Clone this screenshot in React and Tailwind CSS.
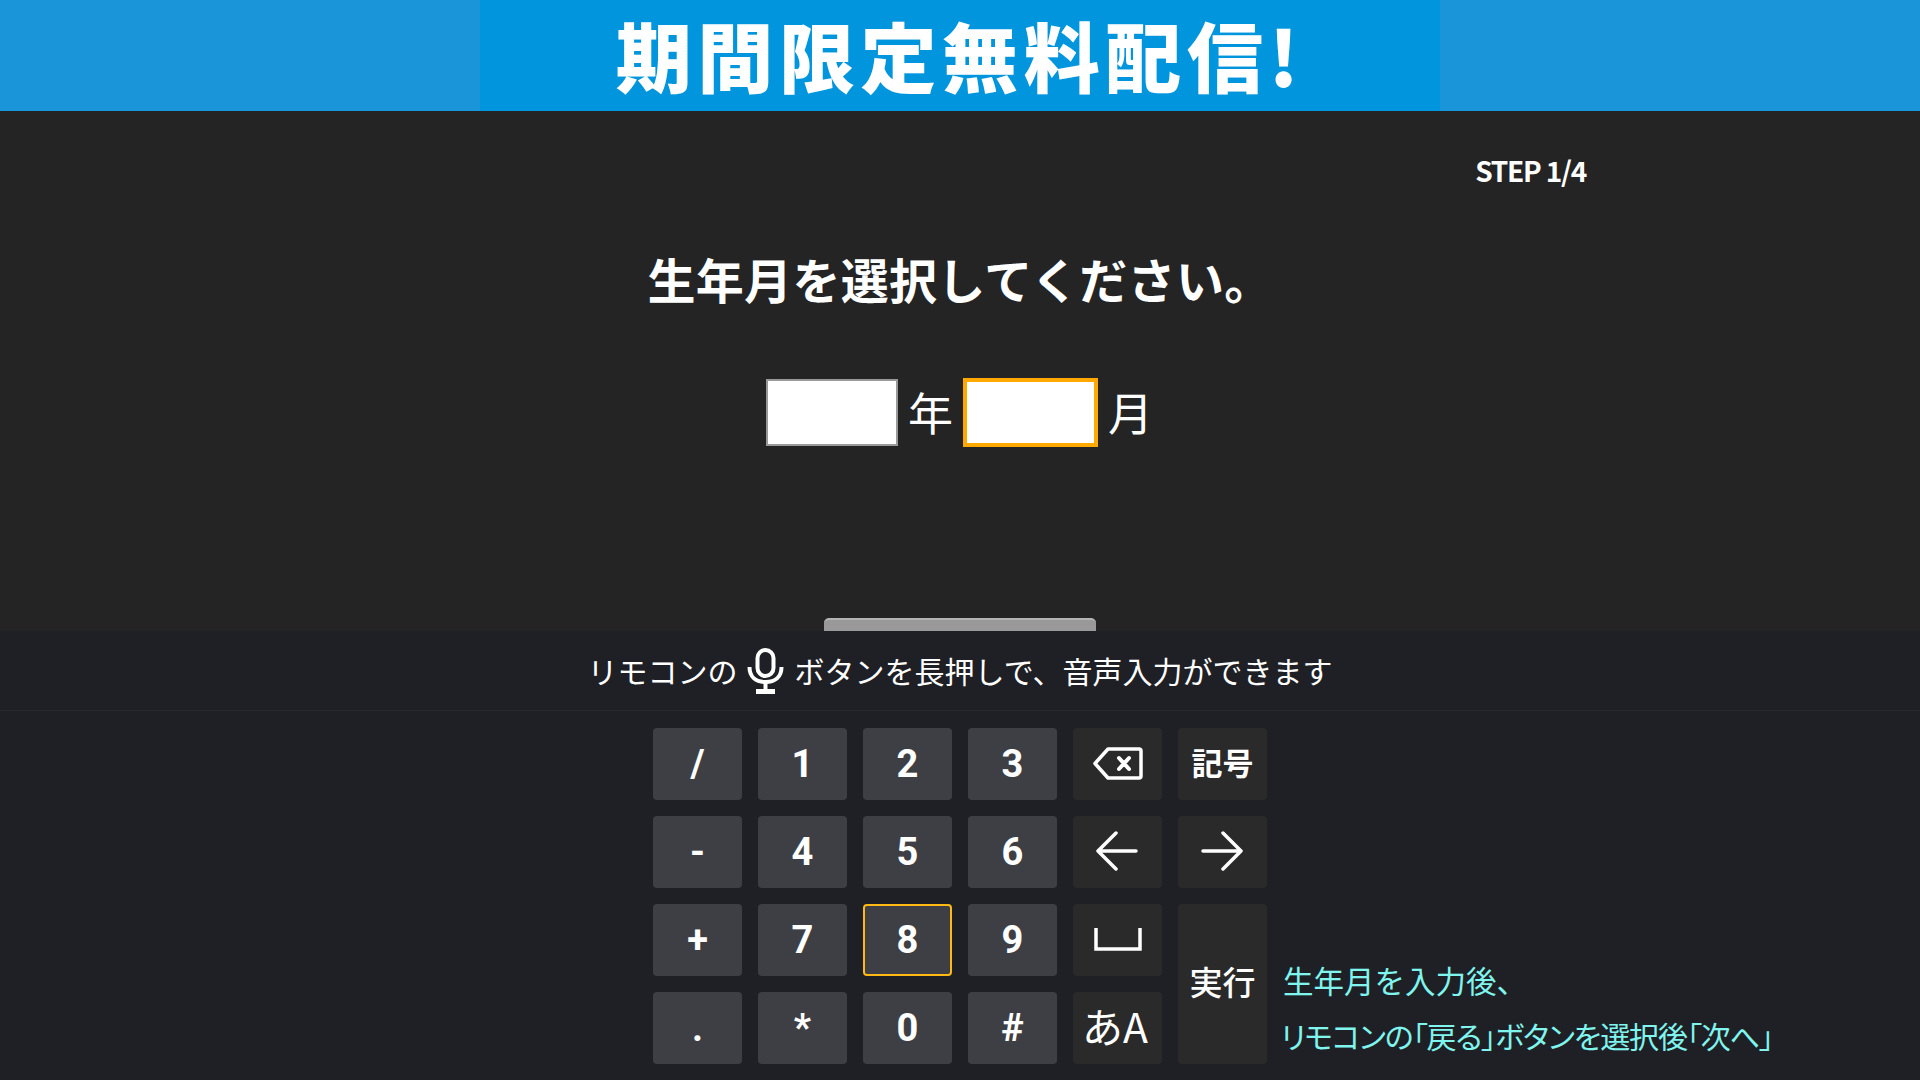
import React from "react";

const light = "bg-[#3e3f44]";
const dark = "bg-[#2a2a2b]";

function Backspace() {
  return (
    <svg className="-mt-[2px]" width="50" height="33" viewBox="0 0 50 33" fill="none" stroke="white" strokeWidth="3.5" strokeLinejoin="round" strokeLinecap="round">
      <path d="M15 2 H46 a2 2 0 0 1 2 2 V29 a2 2 0 0 1 -2 2 H15 L2 16.5 Z" />
      <path d="M26 11 L36 22 M36 11 L26 22" strokeWidth="4" />
    </svg>
  );
}
function ArrowL() {
  return (
    <svg className="-mt-[2px] -ml-[2px]" width="42" height="40" viewBox="0 0 42 40" fill="none" stroke="white" strokeWidth="3.5" strokeLinecap="round" strokeLinejoin="round">
      <path d="M40 20 H2 M20 2 L2 20 L20 38" />
    </svg>
  );
}
function ArrowR() {
  return (
    <svg className="-mt-[2px] -ml-[2px]" width="42" height="40" viewBox="0 0 42 40" fill="none" stroke="white" strokeWidth="3.5" strokeLinecap="round" strokeLinejoin="round">
      <path d="M2 20 H40 M22 2 L40 20 L22 38" />
    </svg>
  );
}
function SpaceIcon() {
  return (
    <svg className="-mt-[2px]" width="48" height="23" viewBox="0 0 48 23" fill="none" stroke="white" strokeWidth="3.5">
      <path d="M2 0 V21 H46 V0" />
    </svg>
  );
}
function Mic() {
  return (
    <svg className="-ml-[1px] mr-[1px]" width="37" height="46" viewBox="0 0 37 46" fill="none" stroke="white" strokeWidth="4">
      <rect x="10.5" y="2" width="16" height="26" rx="8" />
      <path d="M2.5 19 C2.5 29 9 34 18.5 34 C28 34 34.5 29 34.5 19" />
      <path d="M18.5 34 V44" />
      <path d="M9 43.5 H28" strokeWidth="5" />
    </svg>
  );
}

function Key({ tone = light, focus, span, className = "", children }) {
  return (
    <div
      className={`flex items-center justify-center rounded-[4px] text-white ${tone} ${span ? "row-span-2" : ""} ${
        focus ? "border-2 border-[#ffb914]" : ""
      } ${className}`}
    >
      {children}
    </div>
  );
}

const digit = "font-['Roboto',sans-serif] font-bold text-[38px]";

export default function App() {
  return (
    <div className="w-[1920px] h-[1080px] flex flex-col overflow-hidden bg-[#242424] font-['Noto_Sans_CJK_JP','Noto_Sans',sans-serif] text-white">
      <div className="h-[111px] shrink-0 bg-[#1a95d9] flex justify-center">
        <div className="w-[960px] h-full bg-[#0095dd] flex items-center justify-center">
          <span className="text-[76px] font-black leading-none tracking-[5.6px] -mt-[3px]">期間限定無料配信!</span>
        </div>
      </div>

      <div className="h-[520px] shrink-0 flex flex-col items-center">
        <div className="self-stretch flex justify-end pr-[334px] pt-[40px] h-[90px]">
          <span className="text-[28px] font-bold leading-[38px] tracking-[-1.2px]">STEP 1/4</span>
        </div>
        <h1 className="mt-[42px] text-[48px] font-bold leading-[70px] tracking-[0.3px]">生年月を選択してください。</h1>
        <div className="mt-[65px] flex items-center pl-[9px]">
          <div className="w-[132px] h-[67px] bg-white border-2 border-[#999999]" />
          <span className="ml-[10px] w-[55px] text-[45px] leading-none -mt-[2px]">年</span>
          <div className="w-[135px] h-[69px] bg-white border-[4px] border-[#ffa800]" />
          <span className="ml-[10px] w-[55px] text-[45px] leading-none -mt-[2px]">月</span>
        </div>
        <div className="mt-auto w-[272px] h-[13px] bg-[#999999] border-t-2 border-[#b4b4b4] rounded-t-[5px]" />
      </div>

      <div className="flex-1 bg-[#1f2025] flex flex-col">
        <div className="h-[80px] shrink-0 border-b border-[#28292e] flex items-center justify-center text-[30px] leading-none gap-[10px] font-normal">
          <span className="-mt-[2px]">リモコンの</span>
          <Mic />
          <span className="-mt-[2px]">ボタンを長押しで、音声入力ができます</span>
        </div>
        <div className="flex gap-[16px] pl-[653px] pt-[17px]">
          <div className="grid grid-cols-[repeat(6,89px)] grid-rows-[repeat(4,72px)] gap-[16px]">
            <Key className={digit}>/</Key>
            <Key className={digit}>1</Key>
            <Key className={digit}>2</Key>
            <Key className={digit}>3</Key>
            <Key tone={dark}><Backspace /></Key>
            <Key tone={dark} className="text-[31px] font-bold"><span className="-mt-[4px]">記号</span></Key>
            <Key className={digit}>-</Key>
            <Key className={digit}>4</Key>
            <Key className={digit}>5</Key>
            <Key className={digit}>6</Key>
            <Key tone={dark}><ArrowL /></Key>
            <Key tone={dark}><ArrowR /></Key>
            <Key className={digit}>+</Key>
            <Key className={digit}>7</Key>
            <Key focus className={digit}>8</Key>
            <Key className={digit}>9</Key>
            <Key tone={dark}><SpaceIcon /></Key>
            <Key tone={dark} span className="text-[33px] font-medium"><span className="-mt-[4px]">実行</span></Key>
            <Key className={digit}>.</Key>
            <Key className={digit}>*</Key>
            <Key className={digit}>0</Key>
            <Key className={digit}>#</Key>
            <Key tone={dark} className="text-[41px] font-normal"><span className="-mt-[5px] -ml-[5px]">あA</span></Key>
          </div>
          <div className="self-end pb-[1px] text-[#7ff5ee] leading-[55px] whitespace-nowrap">
            <div className="text-[30.5px]">生年月を入力後、</div>
            <div className="text-[30px] tracking-[-1.1px] [font-feature-settings:'palt'] -ml-[2px]">リモコンの「戻る」ボタンを選択後「次へ」</div>
          </div>
        </div>
      </div>
    </div>
  );
}
